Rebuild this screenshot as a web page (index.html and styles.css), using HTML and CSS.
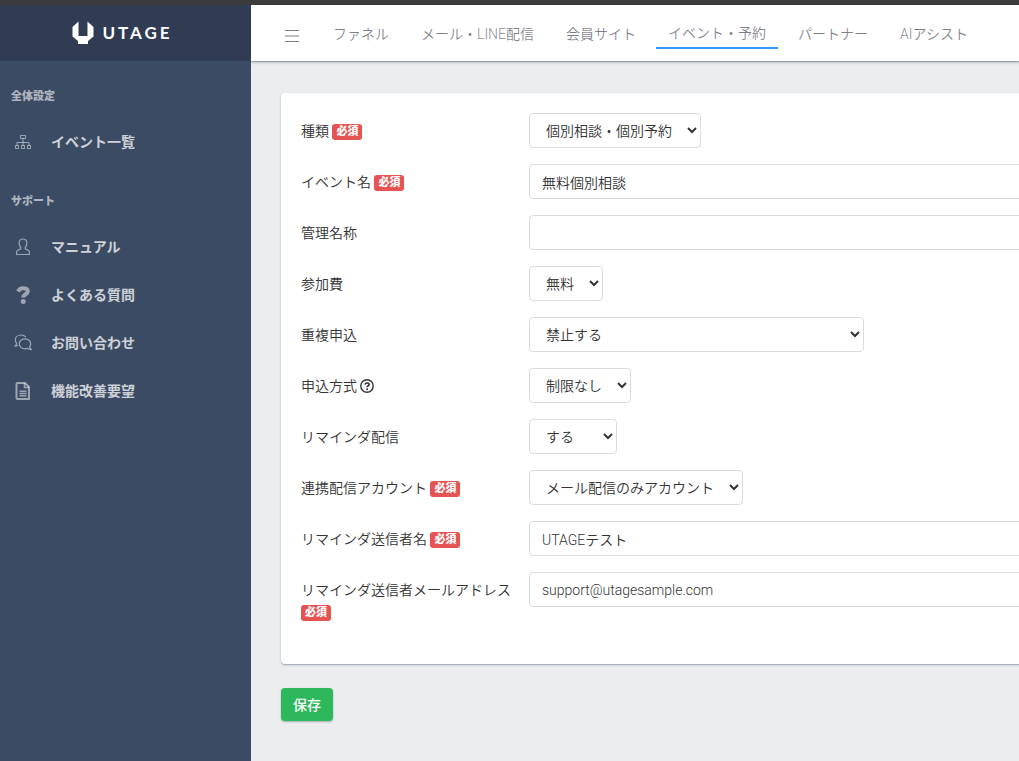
FILE: index.html
```
<!DOCTYPE html>
<html lang="ja">
<head>
  <meta charset="UTF-8">
  <meta name="viewport" content="width=device-width, initial-scale=1">
  <title>UTAGE</title>
  <link rel="stylesheet" href="styles.css">
</head>
<body>

  <div class="app">

    <!-- サイドバー -->
    <aside class="sidebar">
      <a class="brand" href="#">
        <svg class="brand-mark" width="22" height="24" viewBox="0 0 22 24" aria-hidden="true">
          <path fill="#fff" d="M6.500 0.500V15H15.500V0.500L21.500 6V15.500L16 20V23H6V20L0.500 15.500V6z"/>
        </svg>
        <span class="brand-name">UTAGE</span>
      </a>
      <nav class="side-nav">
        <h2 class="side-title">全体設定</h2>
        <a class="side-link" href="#">
          <svg class="side-icon" viewBox="0 0 18 18" fill="none" stroke="currentColor">
            <path d="M6.500 2.500h5v3h-5zM1.500 12.500h3v3h-3zM7.500 12.500h3v3h-3zM13.500 12.500h3v3h-3zM9 5.500v7M3 12.500v-3h12v3"/>
          </svg>
          イベント一覧
        </a>
        <h2 class="side-title">サポート</h2>
        <a class="side-link" href="#">
          <svg class="side-icon" viewBox="0 0 18 18" fill="none" stroke="currentColor">
            <path stroke-width="1.200" d="M9 1C6.500 1 5.200 2.600 5.200 5c0 2.200.5 3.500 1.500 4.600v1.200L3.500 12.500c-.6.400-.9.800-.9 1.500v2.500h12.800V14c0-.700-.3-1.100-.9-1.500l-3.200-1.700V9.600c1-1.100 1.500-2.400 1.500-4.600 0-2.400-1.300-4-3.800-4z"/>
          </svg>
          マニュアル
        </a>
        <a class="side-link" href="#">
          <svg class="side-icon" viewBox="0 0 18 18" fill="none" stroke="currentColor">
            <path stroke-width="4" d="M4 5.500C5 3.500 6.500 2.200 9 2.200c3 0 4.800 1.300 4.800 3.200 0 3-4.600 2.800-4.600 6.100"/>
            <circle cx="9.200" cy="15.500" r="2.500" fill="currentColor" stroke="none"/>
          </svg>
          よくある質問
        </a>
        <a class="side-link" href="#">
          <svg class="side-icon" viewBox="0 0 18 18" fill="none" stroke="currentColor" stroke-width="1.200">
            <path d="M11.800 3.200C10.700 1.800 9 1 7 1 3.700 1 1.300 3.200 1.300 6c0 1.200.5 2.300 1.300 3.200 0 1.200-.6 2.200-1.600 2.800 1.100.1 2.200-.1 3.200-.7"/>
            <path d="M11 4.800c-3.200 0-5.700 2.200-5.700 5s2.500 5 5.700 5c.9 0 1.700-.2 2.500-.5 1.100.9 2.300 1.400 3.900 1.300-1-.800-1.700-1.800-1.800-3 .7-.8 1.100-1.700 1.100-2.800 0-2.800-2.500-5-5.700-5z"/>
          </svg>
          お問い合わせ
        </a>
        <a class="side-link" href="#">
          <svg class="side-icon" viewBox="0 0 18 18" fill="none" stroke="currentColor">
            <path stroke-width="2" stroke-linejoin="round" d="M3.500 1h7.500l4 4v12H3.500a1 1 0 0 1-1-1V2a1 1 0 0 1 1-1z"/>
            <path stroke-width="1.500" d="M10.500 1v4.500H15M5.500 9.300h7M5.500 11.500h7M5.500 13.700h7"/>
          </svg>
          機能改善要望
        </a>
      </nav>
    </aside>

    <div class="wrapper">

      <!-- ヘッダー -->
      <header class="header">
        <button class="toggler" type="button" aria-label="メニュー">
          <svg width="14" height="14" viewBox="0 0 14 14" stroke="currentColor">
            <path d="M0 1.500h14M0 7h14M0 12.500h14"/>
          </svg>
        </button>
        <nav class="header-nav">
          <a class="header-link" href="#">ファネル</a>
          <a class="header-link" href="#">メール・LINE配信</a>
          <a class="header-link" href="#">会員サイト</a>
          <a class="header-link active" href="#">イベント・予約</a>
          <a class="header-link" href="#">パートナー</a>
          <a class="header-link" href="#">AIアシスト</a>
        </nav>
      </header>

      <main class="main">
        <form class="event-form">
          <div class="card">
            <div class="row">
              <label class="label" for="type">種類 <span class="badge">必須</span></label>
              <div class="field">
                <select class="control" id="type"><option>個別相談・個別予約</option></select>
              </div>
            </div>
            <div class="row">
              <label class="label" for="name">イベント名 <span class="badge">必須</span></label>
              <div class="field">
                <input class="control wide" type="text" id="name" value="無料個別相談">
              </div>
            </div>
            <div class="row">
              <label class="label" for="admin-name">管理名称</label>
              <div class="field">
                <input class="control wide" type="text" id="admin-name">
              </div>
            </div>
            <div class="row">
              <label class="label" for="fee">参加費</label>
              <div class="field">
                <select class="control" id="fee"><option>無料</option><option>有料</option></select>
              </div>
            </div>
            <div class="row">
              <label class="label" for="duplicate">重複申込</label>
              <div class="field">
                <select class="control medium" id="duplicate"><option>禁止する</option></select>
              </div>
            </div>
            <div class="row">
              <label class="label" for="method">申込方式
                <svg class="help" width="14" height="14" viewBox="0 0 14 14" fill="none" stroke="currentColor" aria-hidden="true">
                  <circle cx="7" cy="7" r="6.200" stroke-width="1.400"/>
                  <path stroke-width="1.700" d="M5 5.600C5.300 4.500 6 4 7.100 4c1.200 0 2 .6 2 1.500C9.100 6.800 7.100 6.700 7.100 8.300"/>
                  <circle cx="7.100" cy="10.200" r="1" fill="currentColor" stroke="none"/>
                </svg>
              </label>
              <div class="field">
                <select class="control" id="method"><option>制限なし</option></select>
              </div>
            </div>
            <div class="row">
              <label class="label" for="remind">リマインダ配信</label>
              <div class="field">
                <select class="control" id="remind"><option>する</option><option>しない</option></select>
              </div>
            </div>
            <div class="row">
              <label class="label" for="account">連携配信アカウント <span class="badge">必須</span></label>
              <div class="field">
                <select class="control" id="account"><option>メール配信のみアカウント</option></select>
              </div>
            </div>
            <div class="row">
              <label class="label" for="sender">リマインダ送信者名 <span class="badge">必須</span></label>
              <div class="field">
                <input class="control wide" type="text" id="sender" value="UTAGEテスト">
              </div>
            </div>
            <div class="row">
              <label class="label" for="sender-mail">リマインダ送信者メールアドレス <span class="badge">必須</span></label>
              <div class="field">
                <input class="control wide" type="email" id="sender-mail" value="support@utagesample.com">
              </div>
            </div>
          </div>
          <button class="save" type="submit">保存</button>
        </form>
      </main>

    </div>
  </div>

</body>
</html>
```

FILE: styles.css
```
* {
  box-sizing: border-box;
}
body {
  margin: 0;
  border-top: 5px solid #3c3c3c;
  min-height: 100vh;
  display: flex;
  font-family: Roboto, "Noto Sans CJK JP", sans-serif;
  font-size: 14px;
  font-weight: 350;
  line-height: 22px;
  color: #333;
  background: #ebedef;
}
a {
  color: inherit;
  text-decoration: none;
}
.app {
  flex: 1;
  display: flex;
  min-width: 0;
}

/* サイドバー */
.sidebar {
  flex: 0 0 251px;
  background: #3c4b64;
  color: #fff;
}
.brand {
  height: 56px;
  padding-right: 6px;
  display: flex;
  align-items: center;
  justify-content: center;
  gap: 8px;
  background: #303c54;
}
.brand-name {
  font-family: Lato, sans-serif;
  font-size: 17px;
  font-weight: 700;
  letter-spacing: 3px;
}
.side-title {
  margin: 0;
  padding: 28px 11px 13px;
  font-size: 11px;
  line-height: 16px;
  font-weight: 900;
  color: rgba(255, 255, 255, 0.6);
}
.side-link {
  height: 48px;
  padding: 0 14px;
  display: flex;
  align-items: center;
  gap: 19px;
  font-weight: 700;
  color: rgba(255, 255, 255, 0.75);
}
.side-icon {
  width: 18px;
  height: 18px;
  color: rgba(255, 255, 255, 0.5);
}

/* ヘッダー */
.wrapper {
  flex: 1;
  min-width: 0;
  overflow: hidden;
}
.header {
  height: 56px;
  padding-left: 34px;
  display: flex;
  align-items: center;
  gap: 22px;
  background: #fff;
  color: rgba(0, 0, 21, 0.5);
  box-shadow: 0 1px 1px rgba(60, 75, 100, 0.3), 0 1px 3px rgba(60, 75, 100, 0.4);
}
.toggler {
  padding: 6px 0 0;
  border: none;
  background: none;
  color: inherit;
  cursor: pointer;
}
.toggler svg {
  display: block;
}
.header-nav {
  display: flex;
  gap: 8px;
}
.header-link {
  padding: 5px 12px 3px;
  white-space: nowrap;
}
.header-link.active {
  padding: 4px 12px 3px;
  border-bottom: 2px solid #39f;
}

/* フォーム */
.main {
  padding: 32px 0 40px 30px;
}
.card {
  margin-right: -40px;
  padding: 20px;
  background: #fff;
  border-radius: 4px;
  box-shadow: 0 1px 1px rgba(60, 75, 100, 0.3), 0 1px 3px rgba(60, 75, 100, 0.2);
}
.row {
  display: flex;
  align-items: flex-start;
  margin-bottom: 16px;
}
.label {
  flex: 0 0 228px;
  padding: 7px 10px 5px 0;
}
.badge {
  display: inline-block;
  padding: 0 4px;
  border-radius: 3px;
  background: #e55353;
  color: #fff;
  font-size: 11px;
  font-weight: 900;
  line-height: 16px;
  vertical-align: middle;
}
.help {
  vertical-align: -2px;
}
.field {
  flex: 1;
  display: flex;
}
.control {
  height: 35px;
  padding: 6px 12px;
  border: 1px solid #d8dbe0;
  border-radius: 4px;
  background: #fff;
  color: #333;
  font-family: inherit;
  font-size: 14px;
  font-weight: inherit;
}
.control.wide {
  width: 100%;
}
.control.medium {
  width: 335px;
}
.save {
  margin-top: 24px;
  height: 33px;
  padding: 0 12px 2px;
  border: none;
  border-radius: 4px;
  background: #2eb85c;
  color: #fff;
  font-family: inherit;
  font-size: 14px;
  font-weight: 500;
  box-shadow: 0 1px 2px rgba(60, 75, 100, 0.4);
  cursor: pointer;
}
```
